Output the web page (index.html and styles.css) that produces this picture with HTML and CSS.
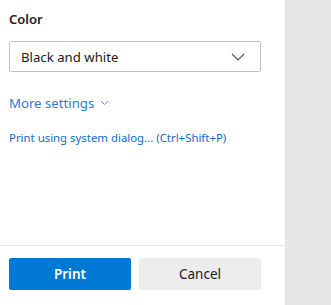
FILE: index.html
```html
<!DOCTYPE html>
<html lang="en">
<head>
  <meta charset="UTF-8">
  <title>Print</title>
  <link rel="stylesheet" href="styles.css">
</head>
<body>
  <div class="dialog">
    <div class="panel">
      <div class="settings">
        <div class="label">Color</div>
        <div class="select">
          <span>Black and white</span>
          <svg class="chevron" width="14" height="8" viewBox="0 0 14 8"><path d="M1 1l6 6 6-6" fill="none" stroke="#555" stroke-width="1.1"/></svg>
        </div>
        <a class="more" href="#">More settings
          <svg width="9" height="6" viewBox="0 0 9 6"><path d="M1 1l3.5 3.5L8 1" fill="none" stroke="#5a9be0" stroke-width="1"/></svg>
        </a>
        <a class="system" href="#">Print using system dialog... (Ctrl+Shift+P)</a>
      </div>
      <div class="footer">
        <button class="btn primary">Print</button>
        <button class="btn">Cancel</button>
      </div>
    </div>
    <div class="preview"></div>
  </div>
</body>
</html>
```

FILE: styles.css
```css
body {
  margin: 0;
  font-family: 'Noto Sans', 'Open Sans', sans-serif;
  color: #1b1b1b;
  background: #fff;
}

.dialog {
  display: flex;
  height: 305px;
}

.panel {
  width: 285px;
  display: flex;
  flex-direction: column;
  background: #fff;
}

.preview {
  flex: 1;
  background: #e6e6e6;
}

.settings {
  flex: 1;
  padding: 9px 24px 0 9px;
  display: flex;
  flex-direction: column;
  align-items: flex-start;
}

.label {
  font-size: 13px;
  font-weight: 600;
  line-height: 20px;
}

.select {
  box-sizing: border-box;
  width: 252px;
  height: 31px;
  margin-top: 12px;
  border: 1px solid #c2c2c2;
  border-radius: 2px;
  display: flex;
  align-items: center;
  justify-content: space-between;
  padding: 0 15px 0 11px;
  font-size: 13.2px;
}

.more {
  margin-top: 21px;
  font-size: 13.2px;
  line-height: 20px;
  color: #2a7bd4;
  text-decoration: none;
  display: flex;
  align-items: center;
  gap: 6px;
}

.system {
  margin-top: 17px;
  font-size: 11.4px;
  line-height: 16px;
  color: #0f6cc9;
  text-decoration: none;
}

.footer {
  border-top: 1px solid #e5e5e5;
  padding: 12px 24px 15px 9px;
  display: flex;
  gap: 8px;
}

.btn {
  width: 122px;
  height: 32px;
  border: none;
  border-radius: 2px;
  background: #ececec;
  color: #1b1b1b;
  font-family: inherit;
  font-size: 13.5px;
}

.btn.primary {
  background: #0078d4;
  color: #fff;
  font-weight: 600;
}
```
